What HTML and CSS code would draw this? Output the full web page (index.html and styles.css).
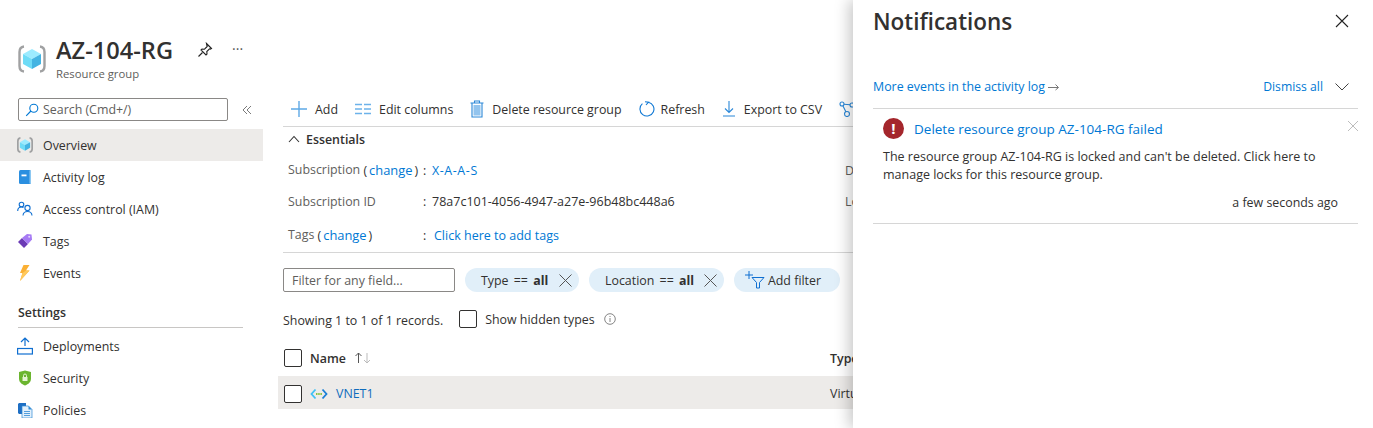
FILE: index.html
```html
<!DOCTYPE html>
<html lang="en">
<head>
  <meta charset="UTF-8">
  <title>AZ-104-RG - Resource group</title>
  <link rel="stylesheet" href="styles.css">
</head>
<body>

<div class="page">
  <aside class="sidebar">
    <div class="res-head">
      <svg class="res-icon" width="28" height="28" viewBox="0 0 28 28">
        <path d="M6 1.500Q1.500 2 1.500 7V21Q1.500 26 6 26.500M22 1.500Q26.500 2 26.500 7V21Q26.500 26 22 26.500" fill="none" stroke="#a0a1a2" stroke-width="2.400"/>
        <path d="M14 4l9 5-9 5-9-5z" fill="#9cebff"/>
        <path d="M5 9l9 5v10l-9-5z" fill="#6fdcf7"/>
        <path d="M23 9l-9 5v10l9-5z" fill="#44b4e2"/>
      </svg>
      <div class="res-titles">
        <h1>AZ-104-RG</h1>
        <div class="res-sub">Resource group</div>
      </div>
      <svg class="pin" width="16" height="16" viewBox="0 0 16 16" fill="none" stroke="#222" stroke-width="1.100">
        <path d="M9.500 1.500l5 5-1 .6-1-.3-2.700 2.700.2 2.500-1 1-5-5 1-1 2.500.2 2.700-2.700-.3-1z"/>
        <path d="M5.500 10.500L1.500 14.500"/>
      </svg>
      <span class="more">&middot;&middot;&middot;</span>
    </div>

    <div class="search-row">
      <div class="search">
        <svg width="14" height="14" viewBox="0 0 14 14" fill="none" stroke="#0078d4" stroke-width="1.100">
          <circle cx="8.800" cy="5.200" r="4"/>
          <path d="M5.900 8L1.200 12.800"/>
        </svg>
        <span>Search (Cmd+/)</span>
      </div>
      <svg class="collapse" width="10" height="10" viewBox="0 0 10 10" fill="none" stroke="#7a7a7a" stroke-width="1">
        <path d="M5 1L1 5l4 4M9 1L5 5l4 4"/>
      </svg>
    </div>

    <nav class="nav">
      <a class="nav-item active">
        <svg width="16" height="16" viewBox="0 0 28 28">
          <path d="M6 1.500Q1.500 2 1.500 7V21Q1.500 26 6 26.500M22 1.500Q26.500 2 26.500 7V21Q26.500 26 22 26.500" fill="none" stroke="#a0a1a2" stroke-width="3"/>
          <path d="M14 4l9 5-9 5-9-5z" fill="#9cebff"/>
          <path d="M5 9l9 5v10l-9-5z" fill="#6fdcf7"/>
          <path d="M23 9l-9 5v10l9-5z" fill="#44b4e2"/>
        </svg>
        Overview
      </a>
      <a class="nav-item">
        <svg width="16" height="16" viewBox="0 0 16 16">
          <rect x="2" y="1" width="12" height="14" rx="1.500" fill="#2b8fe0"/>
          <rect x="12.500" y="1.500" width="1.500" height="13" fill="#8cc8f2"/>
          <rect x="4.500" y="5.500" width="5" height="1.800" fill="#fff"/>
        </svg>
        Activity log
      </a>
      <a class="nav-item">
        <svg width="16" height="16" viewBox="0 0 16 16" fill="none" stroke="#0f6fd1" stroke-width="1.100">
          <circle cx="4.500" cy="3.500" r="2.300"/>
          <path d="M.7 10c0-2.500 1.500-4 3.800-4 .8 0 1.500.2 2 .5"/>
          <circle cx="10.500" cy="7" r="2.600"/>
          <path d="M6 14.500c.2-2.500 2-4 4.500-4s4.300 1.500 4.500 4"/>
        </svg>
        Access control (IAM)
      </a>
      <a class="nav-item">
        <svg width="16" height="16" viewBox="0 0 16 16">
          <path d="M1 9l4-4 6 6-4 4z" fill="#6b3bb5"/>
          <path d="M5 5l5-4 4.500.5.500 5-4 4.500z" fill="#a67af4"/>
          <circle cx="12.200" cy="3.800" r="1" fill="#e6d8fb"/>
        </svg>
        Tags
      </a>
      <a class="nav-item">
        <svg width="16" height="16" viewBox="0 0 16 16">
          <path d="M6.500 0h6L9 5.500h3.500L3 16l2.500-8H3z" fill="#fbb034"/>
          <path d="M9 5.500h3.500L3 16l2.500-8z" fill="#ffc95c"/>
        </svg>
        Events
      </a>
    </nav>

    <h2 class="nav-heading">Settings</h2>

    <nav class="nav">
      <a class="nav-item">
        <svg width="16" height="18" viewBox="0 0 16 18" fill="none" stroke="#0f6fd1" stroke-width="1.200">
          <rect x=".6" y="11.500" width="14.800" height="5.500"/>
          <path d="M8 9V1M4 5l4-4 4 4"/>
        </svg>
        Deployments
      </a>
      <a class="nav-item">
        <svg width="16" height="16" viewBox="0 0 16 16">
          <path d="M8 .5l6 1.500v6.500c0 3.500-2.500 5.700-6 7-3.500-1.300-6-3.500-6-7V2z" fill="#6bb52f"/>
          <rect x="5.500" y="7" width="5" height="4" fill="#e6f4d5"/>
          <path d="M6.500 7V5.500a1.500 1.500 0 013 0V7" fill="none" stroke="#e6f4d5"/>
        </svg>
        Security
      </a>
      <a class="nav-item">
        <svg width="16" height="16" viewBox="0 0 16 16">
          <path d="M1 2l1-1h7v11H2l-1-1z" fill="#1e6fc4"/>
          <path d="M5 4h6.500L15 7.500V16H5z" fill="#e3f0fb" stroke="#2f8ad6" stroke-width=".7"/>
          <path d="M11.500 4L15 7.500h-3.500z" fill="#2f8ad6"/>
          <path d="M7 9.500h6M7 11.500h6M7 13.500h6" stroke="#2f8ad6" stroke-width=".8"/>
        </svg>
        Policies
      </a>
    </nav>
  </aside>

  <main class="main">
    <div class="toolbar">
      <button class="tool">
        <svg width="16" height="16" viewBox="0 0 16 16" stroke="#5ea9e6" stroke-width="1.400"><path d="M8 0v16M0 8h16"/></svg>
        Add
      </button>
      <button class="tool">
        <svg width="16" height="12" viewBox="0 0 16 12" stroke="#6cb2ea" stroke-width="1.500"><path d="M0 1.500h7M9 1.500h7M0 6h7M9 6h7M0 10.500h7M9 10.500h7"/></svg>
        Edit columns
      </button>
      <button class="tool">
        <svg width="14" height="18" viewBox="0 0 14 18" fill="none" stroke="#2b88d8" stroke-width="1.100"><path d="M.5 3h13M4.500 3V1h5v2M2 3v14h10V3"/><rect x="3.500" y="5" width="7" height="10.500" fill="#92c4ee" stroke="none"/></svg>
        Delete resource group
      </button>
      <button class="tool tool-refresh">
        <svg width="16" height="16" viewBox="0 0 16 16" fill="none" stroke="#0f78d4" stroke-width="1.100"><path d="M9.500 1.200A7 7 0 1 1 3.400 2.700M6 .8L9.500 1.200 7 4"/></svg>
        Refresh
      </button>
      <button class="tool">
        <svg width="14" height="16" viewBox="0 0 14 16" fill="none" stroke="#2b88d8" stroke-width="1.100"><path d="M7 0v11M3 7.500L7 11.500l4-4M1 15h12"/></svg>
        Export to CSV
      </button>
      <button class="tool">
        <svg width="16" height="16" viewBox="0 0 16 16" fill="none" stroke="#2b88d8" stroke-width="1.100"><circle cx="3" cy="3" r="2"/><circle cx="13" cy="4" r="2"/><circle cx="8" cy="13" r="2.500"/><path d="M5 3.300l6 .5M4 5l3 6"/></svg>
      </button>
    </div>

    <section class="essentials">
      <div class="ess-head">
        <svg width="12" height="8" viewBox="0 0 12 8" fill="none" stroke="#333" stroke-width="1.100"><path d="M1 7l5-5.500L11 7"/></svg>
        Essentials
      </div>
      <div class="ess-grid">
        <div class="ess-row">
          <span class="ess-label">Subscription <span class="paren">(<a class="link">change</a>)</span></span>
          <span class="ess-colon">:</span>
          <a class="link link-spaced">X-A-A-S</a>
          <span class="ess-label">Deployments</span>
        </div>
        <div class="ess-row ess-row-id">
          <span class="ess-label">Subscription ID</span>
          <span class="ess-colon">:</span>
          <span class="ess-id">78a7c101-4056-4947-a27e-96b48bc448a6</span>
          <span class="ess-label">Location</span>
        </div>
        <div class="ess-row ess-row-tags">
          <span class="ess-label">Tags <span class="paren">(<a class="link">change</a>)</span></span>
          <span class="ess-colon">:</span>
          <a class="link add-tags">Click here to add tags</a>
        </div>
      </div>
    </section>

    <div class="filters">
      <div class="filter-input">Filter for any field...</div>
      <div class="chip chip-type"><span>Type == <b>all</b></span>
        <svg width="13" height="13" viewBox="0 0 13 13" stroke="#555" stroke-width="1"><path d="M.5.500l12 12M12.500.5l-12 12"/></svg>
      </div>
      <div class="chip chip-loc"><span>Location == <b>all</b></span>
        <svg width="13" height="13" viewBox="0 0 13 13" stroke="#555" stroke-width="1"><path d="M.5.500l12 12M12.500.5l-12 12"/></svg>
      </div>
      <div class="chip chip-add">
        <svg width="20" height="18" viewBox="0 0 20 18" fill="none" stroke="#0f6fd1" stroke-width="1"><path d="M4 0v8M0 4h8M7 6.500h12l-4.500 5V17h-3v-5.500z"/></svg>
        <span>Add filter</span>
      </div>
    </div>

    <div class="records">
      <span class="records-count">Showing 1 to 1 of 1 records.</span>
      <span class="checkbox"></span>
      <span class="records-hidden">Show hidden types</span>
      <svg width="12" height="12" viewBox="0 0 12 12" fill="none" stroke="#666" stroke-width=".8"><circle cx="6" cy="6" r="5.300"/><path d="M6 5v4M6 3v1"/></svg>
    </div>

    <div class="table">
      <div class="t-row t-head">
        <span class="checkbox"></span>
        <span class="t-name"><b>Name</b>
          <svg width="18" height="12" viewBox="0 0 18 12" fill="none" stroke-width="1"><path d="M4.500 11V1M1.500 4l3-3 3 3" stroke="#555"/><path d="M13 1v10M10 8l3 3 3-3" stroke="#bbb"/></svg>
        </span>
        <span class="t-type"><b>Type</b></span>
      </div>
      <div class="t-row t-body">
        <span class="checkbox"></span>
        <span class="t-name">
          <svg width="18" height="12" viewBox="0 0 18 12" fill="none" stroke-width="1.800"><path d="M5.500 1.500L1.500 6l4 4.500" stroke="#3fc0f5"/><path d="M12.500 1.500l4 4.500-4 4.500" stroke="#1a7fd6"/><path d="M6 6h1.500M8.200 6h1.500M10.400 6h1.500" stroke="#86c440"/></svg>
          <a class="link link-dark">VNET1</a>
        </span>
        <span class="t-type">Virtual network</span>
      </div>
    </div>
  </main>

  <aside class="panel">
    <div class="panel-head">
      <h2>Notifications</h2>
      <svg width="14" height="14" viewBox="0 0 14 14" stroke="#222" stroke-width="1.100"><path d="M1 1l12 12M13 1L1 13"/></svg>
    </div>
    <div class="panel-links">
      <a class="link">More events in the activity log
        <svg width="11" height="8" viewBox="0 0 11 8" fill="none" stroke="#555" stroke-width=".8"><path d="M0 4.500h10M7.500 1.500l3 3-3 2.500"/></svg>
      </a>
      <div class="dismiss">
        <a class="link">Dismiss all</a>
        <svg width="14" height="8" viewBox="0 0 14 8" fill="none" stroke="#444" stroke-width="1"><path d="M.5.500L7 7l6.500-6.500"/></svg>
      </div>
    </div>
    <div class="notice">
      <svg class="notice-x" width="10" height="10" viewBox="0 0 10 10" stroke="#b5b5b5" stroke-width=".9"><path d="M0 0l10 10M10 0L0 10"/></svg>
      <div class="notice-title">
        <span class="error-dot">!</span>
        <a class="link">Delete resource group AZ-104-RG failed</a>
      </div>
      <p>The resource group AZ-104-RG is locked and can't be deleted. Click here to manage locks for this resource group.</p>
      <div class="notice-time">a few seconds ago</div>
    </div>
  </aside>
</div>

</body>
</html>
```

FILE: styles.css
```css
* {
  box-sizing: border-box;
}
html, body {
  margin: 0;
  height: 100%;
}
body {
  font-family: "Open Sans", "Noto Sans", sans-serif;
  font-size: 12.4px;
  color: #323130;
  background: white;
  overflow: hidden;
}
.page {
  display: flex;
  height: 428px;
  width: 1373px;
  overflow: hidden;
  position: relative;
}
.link {
  color: #0078d4;
  text-decoration: none;
}

/* left menu */
.sidebar {
  width: 263px;
  flex-shrink: 0;
}
.res-head {
  display: flex;
  align-items: flex-start;
  padding: 34px 0 0 18px;
  height: 98px;
}
.res-icon {
  margin: 11px 10px 0 0;
}
.res-titles h1 {
  margin: 0;
  font-size: 23.6px;
  line-height: 32px;
  font-weight: 600;
}
.res-sub {
  font-size: 11.3px;
  line-height: 16px;
  color: #605e5c;
}
.pin {
  margin: 8px 0 0 24px;
}
.more {
  margin: 5px 0 0 19px;
  font-size: 14px;
  color: #555;
}
.search-row {
  display: flex;
  align-items: center;
  padding-left: 18px;
}
.search {
  width: 210px;
  height: 23px;
  border: 1px solid #8a8886;
  border-radius: 2px;
  display: flex;
  align-items: center;
  gap: 4px;
  padding-left: 6px;
  color: #605e5c;
}
.collapse {
  margin-left: 14px;
}
.nav {
  display: flex;
  flex-direction: column;
}
.search-row + .nav {
  margin-top: 8px;
}
.nav-item {
  display: flex;
  align-items: center;
  gap: 10px;
  height: 32px;
  padding-left: 17px;
  color: #323130;
}
.nav-item svg {
  flex-shrink: 0;
}
.nav-item.active {
  background: #edebe9;
}
.nav-heading {
  margin: 16px 20px 2px 18px;
  padding-bottom: 6px;
  border-bottom: 1px solid #c8c6c4;
  font-size: 12.4px;
  line-height: 16px;
  font-weight: 600;
}

/* resource list */
.main {
  width: 590px;
  flex-shrink: 0;
  overflow: hidden;
  padding: 97px 0 0 15px;
}
.toolbar {
  display: flex;
  align-items: center;
  gap: 17px;
  height: 30px;
  margin-left: 5px;
  padding: 0 0 5px 8px;
  border-bottom: 1px solid #d6d6d6;
  white-space: nowrap;
}
.tool {
  display: flex;
  align-items: center;
  gap: 8px;
  padding: 0;
  border: none;
  background: none;
  font: inherit;
  color: #323130;
  flex-shrink: 0;
}
.tool-refresh svg {
  margin-right: -2px;
}
.essentials {
  margin-left: 5px;
  border-bottom: 1px solid #d6d6d6;
  height: 126px;
  padding-left: 5px;
}
.ess-head {
  display: flex;
  align-items: center;
  gap: 6px;
  height: 24px;
  font-weight: 600;
}
.ess-grid {
  padding-top: 3px;
}
.ess-row {
  display: grid;
  grid-template-columns: 135px 9px 413px 100px;
  height: 32px;
  align-items: center;
  white-space: nowrap;
}
.ess-row-id {
  height: 30px;
}
.ess-row-tags {
  margin-top: 3px;
}
.ess-label {
  color: #605e5c;
}
.ess-id {
  font-size: 12.5px;
}
.paren {
  color: #323130;
  vertical-align: -1px;
}
.paren a {
  margin: 0 2px;
  font-size: 12.9px;
}
.link-spaced {
  letter-spacing: 0.6px;
}
.add-tags {
  margin-left: 2px;
  font-size: 12.5px;
}
.filters {
  display: flex;
  align-items: center;
  gap: 10px;
  margin: 15px 0 0 5px;
  white-space: nowrap;
}
.filter-input {
  width: 172px;
  height: 24px;
  border: 1px solid #8a8886;
  border-radius: 2px;
  padding-left: 8px;
  line-height: 23px;
  color: #605e5c;
}
.chip {
  height: 24px;
  border-radius: 12px;
  background: #e1eff9;
  display: flex;
  align-items: center;
  justify-content: space-between;
  padding: 0 7px 0 16px;
  word-spacing: 2px;
}
.chip b {
  font-weight: 700;
}
.chip-type {
  width: 114px;
}
.chip-loc {
  width: 135px;
}
.chip-add {
  width: 106px;
  padding: 0 19px 0 11px;
  word-spacing: 0;
}
.records {
  display: flex;
  align-items: center;
  gap: 8px;
  margin: 16px 0 0 5px;
  height: 22px;
  white-space: nowrap;
}
.records-count {
  margin-right: 8px;
  padding-top: 2px;
}
.records-hidden {
  margin-right: 1px;
}
.checkbox {
  width: 18px;
  height: 18px;
  border: 1px solid #323130;
  border-radius: 2px;
  flex-shrink: 0;
  background: white;
}
.table {
  margin-top: 10px;
}
.t-row {
  display: grid;
  grid-template-columns: 26px 520px 200px;
  align-items: center;
  padding-left: 6px;
  white-space: nowrap;
}
.t-head {
  height: 36px;
}
.t-body {
  height: 33px;
  padding-top: 2px;
  background: #edebe9;
}
.t-name {
  display: flex;
  align-items: center;
  gap: 8px;
}
.t-name b, .t-type b {
  font-weight: 600;
}
.link-dark {
  color: #0f6cbd;
}

/* notifications flyout, sits over the page */
.panel {
  position: absolute;
  top: 0;
  right: 0;
  bottom: 0;
  width: 520px;
  background: white;
  box-shadow: -4px 0 14px rgba(0, 0, 0, 0.22);
  padding: 0 15px 0 20px;
}
.panel-head {
  display: flex;
  align-items: center;
  justify-content: space-between;
  height: 44px;
  padding: 0 9px 2px 0;
}
.panel-head h2 {
  margin: 0;
  font-size: 22.5px;
  font-weight: 600;
}
.panel-links {
  display: flex;
  align-items: center;
  justify-content: space-between;
  height: 65px;
  padding: 21px 9px 0 0;
  border-bottom: 1px solid #d6d6d6;
}
.dismiss {
  display: flex;
  align-items: center;
  gap: 12px;
  font-size: 12.2px;
}
.notice {
  position: relative;
  border-bottom: 1px solid #d6d6d6;
  height: 115px;
  padding: 9px 0 0 10px;
}
.notice-x {
  position: absolute;
  top: 12px;
  right: 0;
}
.notice-title {
  display: flex;
  align-items: center;
  gap: 10px;
  font-size: 13.5px;
}
.error-dot {
  width: 21px;
  height: 21px;
  border-radius: 50%;
  background: #a4262c;
  color: white;
  font-weight: 700;
  font-size: 15px;
  line-height: 21px;
  text-align: center;
}
.notice p {
  margin: 9px 30px 0 0;
  font-size: 12.5px;
  line-height: 18px;
}
.notice-time {
  text-align: right;
  margin: 10px 20px 0 0;
}
```
